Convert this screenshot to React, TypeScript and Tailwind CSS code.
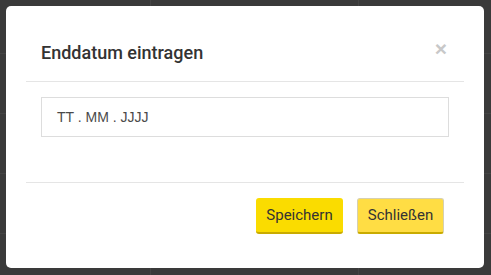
import React from 'react';

const rows = [0, 1, 2, 3, 4];

export default function App() {
  return (
    <div className="relative w-[491px] h-[275px] overflow-hidden bg-[#3a3a3a]" style={{ fontFamily: 'Roboto, "Liberation Sans", sans-serif' }}>
      {/* Dimmed table behind the dialog */}
      <div className="flex flex-col pt-[53px]">
        {rows.map((r) => (
          <div key={r} className="grid grid-cols-[151px_208px_1fr] h-[60px] border-t border-[#444444]">
            <div className="border-r border-[#444444]" />
            <div className="border-r border-[#444444]" />
            <div />
          </div>
        ))}
      </div>
      <div className="absolute top-0 left-0 w-full h-[53px] grid grid-cols-[151px_208px_1fr]">
        <div className="border-r border-[#444444]" />
        <div className="border-r border-[#444444]" />
        <div />
      </div>

      {/* Dialog */}
      <div className="absolute left-[6px] top-[6px] w-[478px] h-[262px] rounded-[5px] bg-white px-5">
        <div className="h-[76px] border-b border-[#e5e5e5] pt-[35px] pl-[15px] pr-[17px] flex items-start justify-between">
          <h4 className="text-[18px] leading-[24px] font-medium text-[#333333]">Enddatum eintragen</h4>
          <button className="text-[#c8c8c8] text-[21px] leading-none font-bold -mt-[3px]" style={{ fontFamily: '"Liberation Sans", Arial, sans-serif' }}>
            ×
          </button>
        </div>

        <div className="px-[15px] pt-[15px] pb-[45px]">
          <div className="h-[40px] border border-[#dddddd] flex items-center pl-[15px] text-[14px] text-[#4a4a4a]" style={{ fontFamily: '"Liberation Sans", Arial, sans-serif' }}>
            TT . MM . JJJJ
          </div>
        </div>

        <div className="border-t border-[#e5e5e5] pt-[15px] pr-5 flex justify-end gap-[14px]">
          <button className="w-[87px] h-[36px] rounded-[3px] bg-[#fadc00] border-b-2 border-[#c9ab00] text-[15px] text-[#333333]">
            Speichern
          </button>
          <button className="w-[87px] h-[36px] rounded-[3px] bg-[#ffdd44] border border-[#d6d0b0] border-b-2 border-b-[#c9ab00] text-[15px] text-[#333333]">
            Schließen
          </button>
        </div>
      </div>
    </div>
  );
}
